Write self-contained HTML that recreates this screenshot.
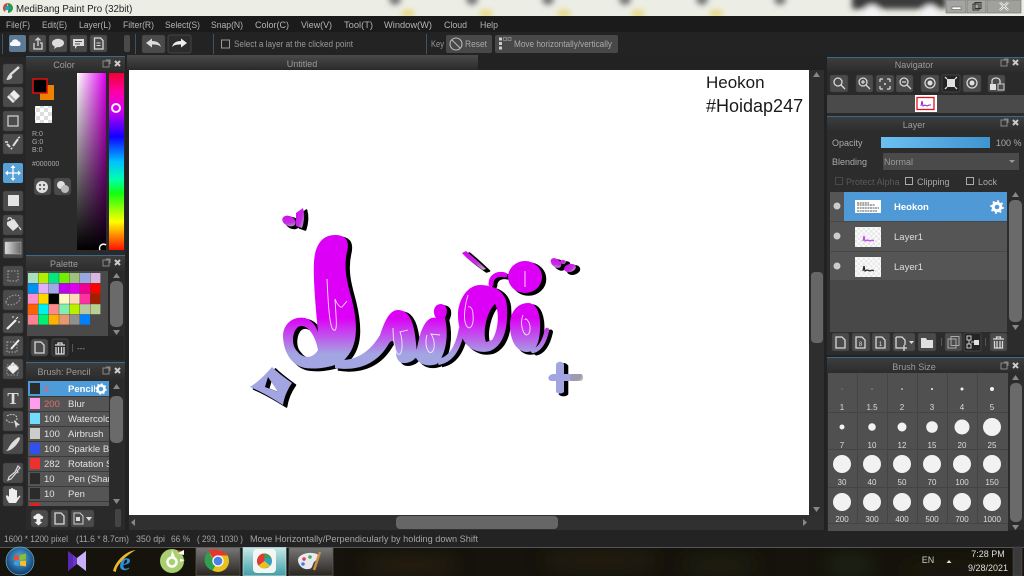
<!DOCTYPE html>
<html><head><meta charset="utf-8"><style>
html,body{margin:0;padding:0;background:#222;width:1024px;height:576px;overflow:hidden}
svg{display:block;position:absolute;left:0;top:0}
text{font-family:"Liberation Sans",sans-serif;font-size:9px;fill:#a8a8a8}
.m{font-size:9px;fill:#b4b4b4}
.c{text-anchor:middle}
.h{font-size:9px;fill:#9c9c9c;text-anchor:middle}
.b{fill:#4b4b4b;stroke:#3a3a3a;stroke-width:.5}
.d{fill:#333}
.i{fill:none;stroke:#d8d8d8;stroke-width:1.3}
.f{fill:#e0e0e0}
.w{fill:none;stroke:#f8e8ff;stroke-width:.9}
.r{font-size:9.5px;fill:#e2e2e2}
.s{font-size:8px;fill:#ddd;text-anchor:middle}
.st{font-size:9px;fill:#a4a4a4}
</style></head><body>
<svg width="1024" height="576" viewBox="0 0 1024 576" xmlns="http://www.w3.org/2000/svg">
<defs>
<linearGradient id="g" gradientUnits="userSpaceOnUse" x1="0" y1="318" x2="0" y2="354"><stop offset="0" stop-color="#dd00f6"/><stop offset="1" stop-color="#a3a5e2"/></linearGradient>
<linearGradient id="hd" x1="0" y1="0" x2="0" y2="1"><stop offset="0" stop-color="#3d3d3d"/><stop offset="1" stop-color="#2c2c2c"/></linearGradient>
<linearGradient id="tab" x1="0" y1="0" x2="0" y2="1"><stop offset="0" stop-color="#4a4a4a"/><stop offset="1" stop-color="#2a2a2a"/></linearGradient>
<linearGradient id="hue" x1="0" y1="0" x2="0" y2="1"><stop offset="0" stop-color="#f00030"/><stop offset=".1" stop-color="#ff00a0"/><stop offset=".2" stop-color="#e000f0"/><stop offset=".36" stop-color="#1000ff"/><stop offset=".5" stop-color="#00c0ff"/><stop offset=".6" stop-color="#00ffb0"/><stop offset=".68" stop-color="#10ff10"/><stop offset=".84" stop-color="#ffff00"/><stop offset="1" stop-color="#ff1000"/></linearGradient>
<linearGradient id="sv1" x1="0" y1="0" x2="1" y2="0"><stop offset="0" stop-color="#fff"/><stop offset="1" stop-color="#e000f0"/></linearGradient>
<linearGradient id="sv2" x1="0" y1="0" x2="0" y2="1"><stop offset="0" stop-color="#000" stop-opacity="0"/><stop offset="1" stop-color="#000"/></linearGradient>
<linearGradient id="blue" x1="0" y1="0" x2="1" y2="0"><stop offset="0" stop-color="#6cc0f0"/><stop offset="1" stop-color="#3f93d0"/></linearGradient>
<linearGradient id="gd" x1="0" y1="0" x2="1" y2="0"><stop offset="0" stop-color="#ddd"/><stop offset="1" stop-color="#666"/></linearGradient>
<linearGradient id="tbtn" x1="0" y1="0" x2="0" y2="1"><stop offset="0" stop-color="#777"/><stop offset="1" stop-color="#2a2622"/></linearGradient>
<linearGradient id="tact" x1="0" y1="0" x2="0" y2="1"><stop offset="0" stop-color="#c8e8e8"/><stop offset="1" stop-color="#40a0a8"/></linearGradient>
<radialGradient id="orb" cx=".5" cy=".4" r=".6"><stop offset="0" stop-color="#5ab0e0"/><stop offset="1" stop-color="#0a3a70"/></radialGradient>
<linearGradient id="fade" x1="0" y1="0" x2="1" y2="1"><stop offset="0" stop-color="#dd00f6"/><stop offset=".6" stop-color="#c030e0"/><stop offset="1" stop-color="#bbb"/></linearGradient>
<filter id="bl" x="-20%" y="-200%" width="140%" height="500%"><feGaussianBlur stdDeviation="3"/></filter>
<filter id="bl2" x="-50%" y="-50%" width="200%" height="200%"><feGaussianBlur stdDeviation="9"/></filter>
<pattern id="ck" width="8" height="8" patternUnits="userSpaceOnUse"><rect width="8" height="8" fill="#fff"/><rect width="4" height="4" fill="#ddd"/><rect x="4" y="4" width="4" height="4" fill="#ddd"/></pattern>
<pattern id="ck2" width="5" height="5" patternUnits="userSpaceOnUse"><rect width="5" height="5" fill="#fbfbfb"/><rect width="2.5" height="2.5" fill="#e8e8e8"/><rect x="2.5" y="2.5" width="2.5" height="2.5" fill="#e8e8e8"/></pattern>
</defs>

<!-- base -->
<rect width="1024" height="576" fill="#222"/>
<!-- title bar -->
<rect width="1024" height="16" fill="#eceee6"/>
<svg x="0" y="0" width="1024" height="16" viewBox="0 0 1024 16">
<g filter="url(#bl)">
<circle cx="395" cy="-1" r="6" fill="#777"/><circle cx="472" cy="-1" r="6" fill="#777"/><circle cx="548" cy="-1" r="6" fill="#777"/><circle cx="625" cy="-1" r="6" fill="#777"/><circle cx="702" cy="-1" r="6" fill="#777"/><circle cx="780" cy="-1" r="6" fill="#777"/>
<rect x="402" y="10" width="12" height="7" fill="#e8d880"/><rect x="480" y="10" width="12" height="7" fill="#e8d880"/><rect x="558" y="10" width="12" height="7" fill="#e8d880"/><rect x="632" y="10" width="12" height="7" fill="#e8d880"/><rect x="710" y="10" width="12" height="7" fill="#e8d880"/>
<rect x="852" y="-6" width="94" height="15" fill="#3a3a3a"/>
<circle cx="872" cy="14" r="9" fill="#f4f4f4"/><circle cx="930" cy="14" r="9" fill="#f4f4f4"/>
</g>
</svg>
<circle cx="8" cy="8" r="5" fill="#e8f0e8"/><path d="M8 3a5 5 0 0 1 0 10z" fill="#2a9a50"/><path d="M8 3a5 5 0 0 0-3 9z" fill="#d84030"/><circle cx="7" cy="8" r="2.2" fill="#20a0d0"/>
<text x="16" y="12" style="font-size:9.7px;fill:#222">MediBang Paint Pro (32bit)</text>
<g stroke="#777" stroke-width=".7"><rect x="946" y="0" width="20" height="13" fill="#a4a4a0"/><rect x="967" y="0" width="19" height="13" fill="#a4a4a0"/><rect x="987" y="0" width="34" height="13" fill="#a0a09c"/></g>
<rect x="952" y="7" width="9" height="2.5" fill="#fff" stroke="#444" stroke-width=".5"/>
<rect x="973" y="4" width="6" height="6" fill="none" stroke="#333"/><rect x="975" y="2.5" width="6" height="6" fill="none" stroke="#333"/>
<path d="M1000 2.5L1008 10M1008 2.5L1000 10" stroke="#fff" stroke-width="2.2"/><path d="M1000 2.5L1008 10M1008 2.5L1000 10" stroke="#333" stroke-width=".5"/>
<!-- menu -->
<rect y="16" width="1024" height="16" fill="#1b1b1b"/>
<g><text class="m" x="6" y="28" textLength="24" lengthAdjust="spacingAndGlyphs">File(F)</text><text class="m" x="42" y="28" textLength="25" lengthAdjust="spacingAndGlyphs">Edit(E)</text><text class="m" x="79" y="28" textLength="32" lengthAdjust="spacingAndGlyphs">Layer(L)</text><text class="m" x="123" y="28" textLength="31" lengthAdjust="spacingAndGlyphs">Filter(R)</text><text class="m" x="165" y="28" textLength="35" lengthAdjust="spacingAndGlyphs">Select(S)</text><text class="m" x="211" y="28" textLength="32" lengthAdjust="spacingAndGlyphs">Snap(N)</text><text class="m" x="255" y="28" textLength="34" lengthAdjust="spacingAndGlyphs">Color(C)</text><text class="m" x="301" y="28" textLength="31" lengthAdjust="spacingAndGlyphs">View(V)</text><text class="m" x="344" y="28" textLength="29" lengthAdjust="spacingAndGlyphs">Tool(T)</text><text class="m" x="384" y="28" textLength="48" lengthAdjust="spacingAndGlyphs">Window(W)</text><text class="m" x="444" y="28" textLength="23" lengthAdjust="spacingAndGlyphs">Cloud</text><text class="m" x="480" y="28" textLength="18" lengthAdjust="spacingAndGlyphs">Help</text></g>
<!-- toolbar -->
<rect y="32" width="1024" height="23" fill="#232323"/>
<rect x="2" y="34" width="1" height="20" fill="#3a5568"/><rect x="135" y="34" width="1" height="20" fill="#3a5568"/><rect x="213" y="34" width="1" height="20" fill="#3a5568"/><rect x="426" y="34" width="1" height="20" fill="#3a5568"/>
<rect x="9" y="35" width="17" height="17" rx="2" fill="#5c7a94"/>
<rect x="29" y="35" width="17" height="17" rx="2" class="b"/><rect x="49" y="35" width="18" height="17" rx="2" class="b"/><rect x="70" y="35" width="17" height="17" rx="2" class="b"/><rect x="90" y="35" width="17" height="17" rx="2" class="b"/>
<rect x="124" y="35" width="6" height="17" rx="2" fill="#4a4a4a"/>
<rect x="142" y="35" width="23" height="18" rx="2" class="b"/><rect x="168" y="35" width="23" height="18" rx="2" fill="#2c2c2c" stroke="#444"/>
<path d="M11.5 46c-2-.3-2.5-3.5.3-4 .7-3 5.2-3.5 6.5-.8 2.5-.2 3.5 4.400.5 4.800z" fill="#f4f8ff"/>
<path d="M34 43v6h8v-6h-2M38 46V38M35.5 40.5L38 38l2.5 2.5" class="i"/>
<ellipse cx="58" cy="43" rx="6" ry="4.3" fill="#ddd"/><path d="M55 46l-1 3 4-2.5z" fill="#ddd"/>
<path d="M73 39h11v7h-7l-2 3v-3h-2z" fill="#ddd"/><path d="M75 41.5h7M75 44h5" stroke="#555"/>
<path d="M94.5 38h6l2.5 2.5V49h-8.5z" class="i"/><path d="M96.5 43h4M96.5 45.5h4" stroke="#ddd"/>
<path d="M146 43l6-4.5v2.5c5 0 8 2 9 6-2-2-4-2.5-9-2.5v3z" fill="#ddd"/>
<path d="M187 43l-6-4.5v2.5c-5 0-8 2-9 6 2-2 4-2.5 9-2.5v3z" fill="#eee"/>
<rect x="221.5" y="40" width="8" height="8" fill="none" stroke="#999"/>
<text x="234" y="47" textLength="119" lengthAdjust="spacingAndGlyphs" style="font-size:9px;fill:#999">Select a layer at the clicked point</text>
<text x="431" y="47" textLength="13" lengthAdjust="spacingAndGlyphs" style="font-size:9px;fill:#999">Key</text>
<rect x="446" y="35" width="46" height="18" rx="2" fill="#484848"/><circle cx="456" cy="44" r="6" fill="none" stroke="#bbb" stroke-width="1.1"/><path d="M452 40l8 8" stroke="#bbb"/>
<text x="465" y="47" textLength="22" lengthAdjust="spacingAndGlyphs" style="font-size:9px;fill:#aaa">Reset</text>
<rect x="495" y="35" width="123" height="18" rx="2" fill="#484848"/>
<g fill="#ccc"><rect x="499" y="37.5" width="3" height="3"/><rect x="503.5" y="37.5" width="3" height="3" fill="none" stroke="#aaa" stroke-width=".6"/><rect x="508" y="37.5" width="3" height="3" fill="none" stroke="#aaa" stroke-width=".6"/><rect x="499" y="42" width="3" height="3"/><rect x="499" y="46.5" width="3" height="3"/></g>
<text x="514" y="47" textLength="98" lengthAdjust="spacingAndGlyphs" style="font-size:9px;fill:#aaa">Move horizontally/vertically</text>

<!-- tab -->
<rect x="127" y="55" width="351" height="15" fill="url(#tab)"/>
<text x="302" y="67" class="h">Untitled</text>

<!-- canvas -->
<rect x="129" y="70" width="680" height="445" fill="#fff"/>
<text x="706" y="88" style="font-size:17px;fill:#1a1a1a">Heokon</text>
<text x="706" y="112" style="font-size:18px;fill:#1a1a1a">#Hoidap247</text>

<!-- lettering shadow (explicit copy) -->
<g transform="translate(3.5,2)" fill="#000" stroke="#000" stroke-width="1.6" stroke-linejoin="round">
<path fill-rule="evenodd" d="M335 235C345 235 350 240 347 252C343 270 348 285 352 300C358 325 358 345 346 358C340 366 320 370 305 368C290 365 283 350 283 335C284 322 295 316 305 318C312 320 316 326 318 332C316 310 313 280 314 262C315 245 322 235 335 235ZM298 327C292 332 291 345 297 351C302 358 312 360 318 350C316 338 308 322 298 327Z"/>
<path d="M335 360C355 362 370 352 380 335C385 320 390 310 398 310C408 310 413 320 415 335C417 350 418 358 412 361C402 366 396 362 396 352C395 340 392 338 388 345C378 362 360 372 335 368Z"/>
<path d="M408 362C417 358 417 345 420 335C424 322 430 316 436 318C432 312 434 304 441 304C448 305 448 312 445 318C449 335 446 355 437 364C428 367 420 365 416 358Z"/>
<path fill-rule="evenodd" d="M458 312C460 295 470 285 480 285C495 285 507 292 507 308C508 325 505 345 490 351C475 355 462 345 460 330C458 322 458 318 458 312ZM486 342C482 330 488 310 495 304C500 312 498 332 492 340Z"/>
<path fill="none" stroke-width="6.500" d="M438 362C450 360 458 350 462 328"/>
<path fill="none" stroke-width="5.500" stroke-linecap="round" d="M491 284C491 276 498 273 505 275"/>
<ellipse cx="525" cy="277" rx="17" ry="16"/>
<path d="M510 325C510 310 519 303 528 303C537 303 541 315 540 330C539 345 535 352 527 352C516 352 510 340 510 325Z"/>
<path fill="none" stroke-width="5" stroke-linecap="round" d="M533 351C541 349 545 339 547 330"/>
<path fill-rule="evenodd" d="M250 387C258 382 265 375 272 367C277 372 285 378 292 383C287 390 284 398 283 405C272 398 262 392 250 387ZM268 377L278 392L265 387Z"/>
<path d="M556 374V364C558 361 562 361 564 364V392C562 394 558 394 556 392Z"/>
<path d="M462 253L466 251C472 256 480 263 486 269L483 270C476 265 468 260 462 253Z"/>
<ellipse cx="289" cy="221" rx="7" ry="5" transform="rotate(25 289 221)"/>
<path d="M296 213L303 208C305 215 304 222 302 228L296 226Z"/>
<ellipse cx="556" cy="263" rx="6" ry="4" transform="rotate(40 556 263)"/>
<ellipse cx="563" cy="262" rx="3" ry="2"/>
<ellipse cx="570" cy="268" rx="6" ry="4" transform="rotate(-15 570 268)"/>
</g>
<!-- lettering fill -->
<g fill="url(#g)" stroke="url(#g)" stroke-width="0">
<path fill-rule="evenodd" d="M335 235C345 235 350 240 347 252C343 270 348 285 352 300C358 325 358 345 346 358C340 366 320 370 305 368C290 365 283 350 283 335C284 322 295 316 305 318C312 320 316 326 318 332C316 310 313 280 314 262C315 245 322 235 335 235ZM298 327C292 332 291 345 297 351C302 358 312 360 318 350C316 338 308 322 298 327Z"/>
<path d="M335 360C355 362 370 352 380 335C385 320 390 310 398 310C408 310 413 320 415 335C417 350 418 358 412 361C402 366 396 362 396 352C395 340 392 338 388 345C378 362 360 372 335 368Z"/>
<path d="M408 362C417 358 417 345 420 335C424 322 430 316 436 318C432 312 434 304 441 304C448 305 448 312 445 318C449 335 446 355 437 364C428 367 420 365 416 358Z"/>
<path fill-rule="evenodd" d="M458 312C460 295 470 285 480 285C495 285 507 292 507 308C508 325 505 345 490 351C475 355 462 345 460 330C458 322 458 318 458 312ZM486 342C482 330 488 310 495 304C500 312 498 332 492 340Z"/>
<path fill="none" stroke-width="6" d="M438 362C450 360 458 350 462 328"/>
<path fill="none" stroke-width="5" stroke-linecap="round" d="M491 284C491 276 498 273 505 275"/>
<ellipse cx="525" cy="277" rx="17" ry="16"/>
<path d="M510 325C510 310 519 303 528 303C537 303 541 315 540 330C539 345 535 352 527 352C516 352 510 340 510 325Z"/>
<path fill="none" stroke-width="4.5" stroke-linecap="round" d="M533 351C541 349 545 339 547 330"/>
<path fill-rule="evenodd" d="M250 387C258 382 265 375 272 367C277 372 285 378 292 383C287 390 284 398 283 405C272 398 262 392 250 387ZM268 377L278 392L265 387Z"/>
<path d="M553 374H556V364C558 361 562 361 564 364V374H582C582 378 580 381 575 381H564V392C562 394 558 394 556 392V381H552C547 381 547 375 553 374Z"/>
</g>
<g fill="url(#fade)">
<path d="M462 253L466 251C472 256 480 263 486 269L483 270C476 265 468 260 462 253Z"/>
<ellipse cx="289" cy="221" rx="7" ry="5" transform="rotate(25 289 221)"/>
<path d="M296 213L303 208C305 215 304 222 302 228L296 226Z"/>
<ellipse cx="556" cy="263" rx="6" ry="4" transform="rotate(40 556 263)"/>
<ellipse cx="563" cy="262" rx="3" ry="2"/>
<ellipse cx="570" cy="268" rx="6" ry="4" transform="rotate(-15 570 268)"/>
</g>
<path d="M327 279C328 300 329 320 332 328C336 334 337 328 336 315L335 299C337 304 340 308 342 307L347 301M393 328C393 340 395 352 398 354C403 357 403 340 400 332L408 330M427 335C424 345 428 355 432 352C436 348 434 338 431 334L440 335M468 295C465 305 463 318 466 325C470 332 474 325 473 315C473 308 470 306 468 307M523 315C520 322 522 332 526 335C531 335 531 325 528 321C526 318 525 319 525 320M525 271V287" class="w"/>
<rect x="570" y="374" width="13" height="7" rx="3" fill="#999" opacity=".7"/>

<!-- canvas scrollbars -->
<rect x="809" y="70" width="15" height="460" fill="#2e2e2e"/>
<rect x="811" y="272" width="12" height="71" rx="4" fill="#666"/>
<path d="M813 77h7l-3.5-5zM813 507h7l-3.5 5z" fill="#888"/>
<rect x="129" y="515" width="695" height="15" fill="#303030"/>
<rect x="396" y="516" width="162" height="13" rx="4" fill="#666"/>
<path d="M135 519v7l-4-3.5z" fill="#888"/><path d="M803 519v7l4-3.5z" fill="#888"/>

<!-- left tools -->
<rect x="0" y="57" width="26" height="473" fill="#262626"/>
<g>
<rect x="3" y="64" width="20" height="20" rx="2" class="b"/><rect x="3" y="87" width="20" height="20" rx="2" class="b"/><rect x="3" y="111" width="20" height="20" rx="2" class="b"/><rect x="3" y="134" width="20" height="20" rx="2" class="b"/>
<rect x="3" y="163" width="20" height="20" rx="2" fill="#58a0d8"/>
<rect x="3" y="191" width="20" height="20" rx="2" class="b"/><rect x="3" y="215" width="20" height="20" rx="2" class="b"/><rect x="3" y="238" width="20" height="20" rx="2" class="b"/>
<rect x="3" y="266" width="20" height="20" rx="2" class="b"/><rect x="3" y="290" width="20" height="20" rx="2" class="b"/><rect x="3" y="313" width="20" height="20" rx="2" class="b"/><rect x="3" y="336" width="20" height="20" rx="2" class="b"/><rect x="3" y="359" width="20" height="20" rx="2" class="b"/>
<rect x="3" y="388" width="20" height="20" rx="2" class="b"/><rect x="3" y="411" width="20" height="20" rx="2" class="b"/><rect x="3" y="434" width="20" height="20" rx="2" class="b"/>
<rect x="3" y="463" width="20" height="20" rx="2" class="b"/><rect x="3" y="486" width="20" height="20" rx="2" class="b"/>
</g>
<path d="M19 67L10 75" stroke="#ddd" stroke-width="2.5"/><path d="M10 74c-2 1-3 4-3.5 6 3 0 5.5-1 6-4z" fill="#ddd"/>
<path d="M14 90l6 6-7 7-6-6z" fill="#eee"/><path d="M8.5 95.5l6 6 1.5-1.5-6-6z" fill="#aaa"/>
<rect x="8" y="116" width="10" height="10" fill="none" stroke="#ccc" stroke-width="1.3"/>
<path d="M7 144l3 3M11 148l1 1M13 146l5-7" stroke="#ddd" stroke-width="2"/><path d="M5 142h3M18 138l2-1" stroke="#ddd" stroke-width="1.5"/>
<path d="M13 166v14M6 173h14" stroke="#fff" stroke-width="1.3"/><path d="M13 165l-2.5 3h5zM13 181l-2.5-3h5zM5 173l3-2.5v5zM21 173l-3-2.5v5z" fill="#fff"/>
<rect x="8" y="195" width="11" height="11" fill="#e4e4e4"/>
<path d="M7 222l7-3 5 7-6 5-6-6z" fill="#e4e4e4"/><path d="M8 220c0-3 3-3 4 0M19 227l2 3" class="i"/>
<rect x="5" y="242" width="16" height="12" fill="url(#gd)" stroke="#bbb" stroke-width=".5"/>
<rect x="8" y="271" width="10" height="10" fill="none" stroke="#aaa" stroke-dasharray="1.5 1.5"/>
<path d="M6 302c0-4 6-7 10-7 4 0 5 3 3 6-3 4-13 6-13 1z" fill="none" stroke="#aaa" stroke-dasharray="1.5 1.5"/>
<path d="M7 329L16 320" stroke="#eee" stroke-width="2.2"/><path d="M18 317l-2 2M13 316v2M20 322h-2" stroke="#eee"/>
<rect x="7" y="342" width="10" height="10" fill="none" stroke="#aaa" stroke-dasharray="1.5 1.5"/><path d="M11 349l8-9" stroke="#eee" stroke-width="2"/>
<path d="M13 362l6 6-6 6-6-6z" fill="#eee"/><rect x="7" y="365" width="11" height="10" fill="none" stroke="#999" stroke-dasharray="1.5 1.5"/>
<text x="13" y="404" class="c" style="font:bold 17px 'Liberation Serif',serif;fill:#ddd">T</text>
<path d="M7 416c3-2 7-2 9 0s1 5-2 6c-3 1-7 0-8-3" fill="none" stroke="#ccc" stroke-dasharray="2 1"/><path d="M14 420l6 5-3 .5-1 3z" fill="#ddd"/>
<path d="M19 437c-4 2-9 7-11 12l-2 2 3-.5c5-2 10-8 11-12z" fill="#ddd"/>
<path d="M18 466l2 2-3 3 1 1-2 1-5 6-3 1 1-3 6-5 1-2z" fill="none" stroke="#ddd" stroke-width="1.2"/>
<path d="M9 503c-2-3-3-5-3-7 0-1 2-1 3 1v-7c0-1.5 2-1.5 2 0v-1c0-1.5 2-1.5 2 0v1c0-1.5 2-1.5 2 0v1c0-1.5 2-1.5 2 0v7l2-2c1-1 2 0 1 1l-4 6z" fill="#eee"/>

<!-- Color panel -->
<rect x="26" y="56" width="99" height="1" fill="#3b6a88"/>
<rect x="26" y="57" width="99" height="15" fill="url(#hd)"/>
<rect x="26" y="72" width="99" height="183" fill="#2a2a2a"/>
<text x="64" y="68" class="h">Color</text>
<rect x="40" y="85" width="14" height="15" fill="#f08000"/>
<rect x="33" y="79" width="14" height="14" fill="#000" stroke="#e01010" stroke-width="1.5"/>
<rect x="35" y="106" width="17" height="17" fill="url(#ck)"/>
<text x="32" y="136" style="font-size:7px;fill:#aaa">R:0</text><text x="32" y="144" style="font-size:7px;fill:#aaa">G:0</text><text x="32" y="152" style="font-size:7px;fill:#aaa">B:0</text>
<text x="32" y="166" style="font-size:7px;fill:#aaa">#000000</text>
<rect x="34" y="178" width="17" height="17" rx="3" class="b"/><rect x="54" y="178" width="17" height="17" rx="3" class="b"/>
<circle cx="42" cy="187" r="6" class="f"/><circle cx="40" cy="185" r="1" fill="#444"/><circle cx="44" cy="185" r="1" fill="#444"/><circle cx="40" cy="189" r="1" fill="#444"/><circle cx="44" cy="189" r="1" fill="#444"/>
<circle cx="61" cy="185" r="4" class="f"/><circle cx="65" cy="189" r="4" fill="#bbb"/>
<rect x="77" y="73" width="29" height="177" fill="url(#sv1)"/><rect x="77" y="73" width="29" height="177" fill="url(#sv2)"/>
<rect x="109" y="73" width="15" height="177" fill="url(#hue)"/>
<circle cx="116" cy="108" r="4" fill="none" stroke="#fff" stroke-width="2"/>
<path d="M100 250a4 4 0 0 1 6-5" fill="none" stroke="#fff" stroke-width="1.5"/>
<g id="hi"><rect x="103" y="61" width="6" height="6" fill="none" stroke="#888"/><path d="M106 60h4v4" fill="none" stroke="#888"/><path d="M115 61l5 5M120 61l-5 5" stroke="#ccc" stroke-width="2"/></g>

<!-- Palette panel -->
<rect x="26" y="255" width="99" height="1" fill="#3b6a88"/>
<rect x="26" y="256" width="99" height="15" fill="url(#hd)"/>
<text x="64" y="267" class="h">Palette</text>
<use href="#hi" y="199"/>
<rect x="26" y="271" width="99" height="91" fill="#2a2a2a"/>
<rect x="27" y="271" width="81" height="65" fill="#4a4a4a"/>
<g>
<rect x="28" y="273" width="10" height="10" fill="#a8e0c0"/><rect x="38.4" y="273" width="10" height="10" fill="#b0f000"/><rect x="48.8" y="273" width="10" height="10" fill="#00e880"/><rect x="59.2" y="273" width="10" height="10" fill="#70f000"/><rect x="69.6" y="273" width="10" height="10" fill="#a0c080"/><rect x="80" y="273" width="10" height="10" fill="#98a8e0"/><rect x="90.4" y="273" width="10" height="10" fill="#d8b8e0"/>
<rect x="28" y="283.4" width="10" height="10" fill="#0090f0"/><rect x="38.4" y="283.4" width="10" height="10" fill="#e0b0ff"/><rect x="48.8" y="283.4" width="10" height="10" fill="#a0a8e8"/><rect x="59.2" y="283.4" width="10" height="10" fill="#c000f0"/><rect x="69.6" y="283.4" width="10" height="10" fill="#e000f0"/><rect x="80" y="283.4" width="10" height="10" fill="#f00090"/><rect x="90.4" y="283.4" width="10" height="10" fill="#ff0000"/>
<rect x="28" y="293.8" width="10" height="10" fill="#ff90d0"/><rect x="38.4" y="293.8" width="10" height="10" fill="#ffd800"/><rect x="48.8" y="293.8" width="10" height="10" fill="#000"/><rect x="59.2" y="293.8" width="10" height="10" fill="#fff8c0"/><rect x="69.6" y="293.8" width="10" height="10" fill="#ffd8b8"/><rect x="80" y="293.8" width="10" height="10" fill="#ff30a0"/><rect x="90.4" y="293.8" width="10" height="10" fill="#a02000"/>
<rect x="28" y="304.2" width="10" height="10" fill="#ff6000"/><rect x="38.4" y="304.2" width="10" height="10" fill="#00f0f0"/><rect x="48.8" y="304.2" width="10" height="10" fill="#ff8888"/><rect x="59.2" y="304.2" width="10" height="10" fill="#80f0b0"/><rect x="69.6" y="304.2" width="10" height="10" fill="#b8f000"/><rect x="80" y="304.2" width="10" height="10" fill="#b8c8a0"/><rect x="90.4" y="304.2" width="10" height="10" fill="#b8d090"/>
<rect x="28" y="314.6" width="10" height="10" fill="#ff8090"/><rect x="38.4" y="314.6" width="10" height="10" fill="#00f070"/><rect x="48.8" y="314.6" width="10" height="10" fill="#ffb000"/><rect x="59.2" y="314.6" width="10" height="10" fill="#e89870"/><rect x="69.6" y="314.6" width="10" height="10" fill="#909090"/><rect x="80" y="314.6" width="10" height="10" fill="#0080ff"/>
</g>
<rect x="110" y="281" width="13" height="46" rx="5" fill="#6a6a6a"/>
<path d="M113 278h7l-3.5-5zM113 330h7l-3.5 5z" fill="#888"/>
<rect x="29" y="336" width="95" height="24" fill="#242424"/>
<rect x="31" y="339" width="17" height="17" rx="3" class="b"/><rect x="52" y="339" width="16" height="17" rx="2" fill="#2e2e2e" stroke="#444"/>
<path d="M35 342h6l3 3v8h-9z" class="i"/>
<path d="M55 345h10M56 347v7h8v-7M58.5 347v7M61.5 347v7M58 345v-2h4v2" class="i"/>
<rect x="72" y="344" width="1" height="8" fill="#555"/>
<text x="77" y="351" style="font-size:8px;fill:#aaa">---</text>

<!-- Brush panel -->
<rect x="26" y="362" width="99" height="1" fill="#3b6a88"/>
<rect x="26" y="363" width="99" height="16" fill="url(#hd)"/>
<text x="64" y="375" class="h">Brush: Pencil</text>
<use href="#hi" y="307"/>
<rect x="26" y="379" width="99" height="151" fill="#2a2a2a"/>
<rect x="28" y="381" width="81" height="125" fill="#555"/>
<svg x="28" y="381" width="81" height="125" viewBox="28 381 81 125">
<rect x="28" y="381" width="81" height="15" fill="#4d9bd8"/>
<path d="M28 396.5h81M28 411.5h81M28 426.5h81M28 441.5h81M28 456.5h81M28 471.5h81M28 486.5h81M28 501.5h81" stroke="#3a3a3a"/>
<rect x="30" y="383" width="10" height="11" fill="#2b2b2b"/><rect x="30" y="398" width="10" height="11" fill="#ff9cf0"/><rect x="30" y="413" width="10" height="11" fill="#70dcff"/><rect x="30" y="428" width="10" height="11" fill="#ccc"/><rect x="30" y="443" width="10" height="11" fill="#3050f0"/><rect x="30" y="458" width="10" height="11" fill="#f03030"/><rect x="30" y="473" width="10" height="11" fill="#2b2b2b"/><rect x="30" y="488" width="10" height="11" fill="#2b2b2b"/><rect x="30" y="503" width="10" height="11" fill="#e02020"/>
<text x="44" y="392" class="r" style="fill:#ee6060">4</text><text x="44" y="407" class="r" style="fill:#e07070">200</text><text x="44" y="422" class="r">100</text><text x="44" y="437" class="r">100</text><text x="44" y="452" class="r">100</text><text x="44" y="467" class="r">282</text><text x="44" y="482" class="r">10</text><text x="44" y="497" class="r">10</text>
<text x="68" y="392" class="r" style="font-weight:bold;fill:#fff">Pencil</text><text x="68" y="407" class="r">Blur</text><text x="68" y="422" class="r">Watercolor</text><text x="68" y="437" class="r">Airbrush</text><text x="68" y="452" class="r">Sparkle Brush</text><text x="68" y="467" class="r">Rotation Symmetry</text><text x="68" y="482" class="r">Pen (Sharp)</text><text x="68" y="497" class="r">Pen</text>
<rect x="95" y="382" width="14" height="13" fill="#4d9bd8"/>
<circle cx="101" cy="389" r="3.5" fill="none" stroke="#fff" stroke-width="2.5"/><circle cx="101" cy="389" r="5" fill="none" stroke="#fff" stroke-width="1.2" stroke-dasharray="1.8 2.1"/>
</svg>
<rect x="110" y="396" width="13" height="47" rx="5" fill="#6a6a6a"/>
<path d="M113 389h7l-3.5-5zM113 499h7l-3.5 5z" fill="#888"/>
<rect x="31" y="510" width="17" height="17" rx="3" class="b"/><rect x="51" y="510" width="17" height="17" rx="2" class="b"/><rect x="71" y="510" width="23" height="17" rx="2" class="b"/><rect x="115" y="509" width="6" height="18" rx="2" fill="#444"/>
<path d="M34.5 519c-2-.5-1.5-3.5 1-3.5 .5-2.5 5-2.5 5.5 0 2.5 0 3 3 1 3.5zM36.5 519h4v3h2l-4 3.5-4-3.5h2z" fill="#eee"/>
<path d="M55 513h6l3 3v8h-9z" class="i"/>
<path d="M74 513h6l3 3v8h-9z" fill="none" stroke="#ccc"/><rect x="76" y="517" width="4" height="4" fill="#ddd"/><path d="M86 517h6l-3 4z" fill="#ddd"/>

<!-- status -->
<rect y="530" width="1024" height="17" fill="#232323"/>
<text x="4" y="542" class="st" textLength="64" lengthAdjust="spacingAndGlyphs">1600 * 1200 pixel</text><text x="76" y="542" class="st" textLength="53" lengthAdjust="spacingAndGlyphs">(11.6 * 8.7cm)</text><text x="136" y="542" class="st" textLength="29" lengthAdjust="spacingAndGlyphs">350 dpi</text><text x="171" y="542" class="st" textLength="19" lengthAdjust="spacingAndGlyphs">66 %</text><text x="197" y="542" class="st" textLength="46" lengthAdjust="spacingAndGlyphs">( 293, 1030 )</text><text x="250" y="542" class="st" textLength="228" lengthAdjust="spacingAndGlyphs">Move Horizontally/Perpendicularly by holding down Shift</text>

<!-- Navigator -->
<rect x="827" y="57" width="197" height="1" fill="#3b6a88"/>
<rect x="827" y="58" width="197" height="14" fill="url(#hd)"/>
<text x="914" y="68" class="h">Navigator</text>
<use href="#hi" x="898" y="-1"/>
<rect x="827" y="72" width="197" height="44" fill="#2a2a2a"/>
<rect x="830" y="75" width="18" height="17" rx="2" class="b"/><rect x="856" y="75" width="17" height="17" rx="2" class="b"/><rect x="876" y="75" width="18" height="17" rx="2" class="b"/><rect x="896" y="75" width="17" height="17" rx="2" class="b"/><rect x="921" y="75" width="18" height="17" rx="2" class="b"/><rect x="942" y="75" width="18" height="17" rx="2" fill="#242424" stroke="#444"/><rect x="963" y="75" width="18" height="17" rx="2" class="b"/><rect x="988" y="75" width="17" height="17" rx="2" class="b"/>
<circle cx="838" cy="82" r="4" class="i"/><path d="M841 85l4 4" class="i"/><circle cx="863" cy="82" r="4" class="i"/><path d="M866 85l4 4M861 82h4M863 80v4" class="i"/>
<path d="M880 79h3M880 79v3M890 79h-3M890 79v3M880 89h3M880 89v-3M890 89h-3M890 89v-3" class="i"/><circle cx="885" cy="84" r="1" class="f"/>
<circle cx="904" cy="82" r="4" class="i"/><path d="M907 85l4 4M902 82h4" class="i"/>
<circle cx="930" cy="83" r="5" class="i"/><circle cx="930" cy="83" r="2.5" class="f"/><circle cx="972" cy="83" r="5" class="i"/><circle cx="972" cy="83" r="2.5" class="f"/>
<rect x="947" y="79" width="8" height="8" class="f"/><path d="M945 77l2 2M957 77l-2 2M945 89l2-2M957 89l-2-2" class="i"/>
<rect x="990" y="84" width="6" height="6" class="f"/><rect x="998" y="84" width="6" height="6" fill="none" stroke="#ccc"/><path d="M992 84v-3c0-4 8-4 8 0v3" class="i"/>
<rect x="827" y="95" width="197" height="18" fill="#4a4a4a"/>
<rect x="915" y="95" width="22" height="17" fill="#fff"/><rect x="917" y="97.5" width="17" height="12" fill="none" stroke="#e01020" stroke-width="1.3"/>
<path d="M921 106l1-5 1 5 2-1 2 1 2-1 2 0" fill="none" stroke="#9020d0"/>

<!-- Layer -->
<rect x="827" y="116" width="197" height="1" fill="#3b6a88"/>
<rect x="827" y="117" width="197" height="15" fill="url(#hd)"/>
<text x="914" y="128" class="h">Layer</text>
<use href="#hi" x="898" y="59"/>
<rect x="827" y="132" width="197" height="223" fill="#2c2c2c"/>
<text x="832" y="146" style="font-size:9px;fill:#aaa">Opacity</text>
<rect x="881" y="137" width="109" height="11" fill="url(#blue)"/>
<text x="996" y="146" style="font-size:9px;fill:#aaa">100 %</text>
<text x="832" y="165" style="font-size:9px;fill:#aaa">Blending</text>
<rect x="883" y="153" width="136" height="17" fill="#4a4a4a"/>
<text x="884" y="165" style="font-size:9px;fill:#999">Normal</text>
<path d="M1009 160h6l-3 3z" fill="#999"/>
<rect x="835.5" y="177.5" width="7" height="7" fill="none" stroke="#4a4a4a"/>
<text x="846" y="185" style="font-size:9px;fill:#5a5a5a">Protect Alpha</text>
<rect x="905.5" y="177.5" width="7" height="7" fill="none" stroke="#aaa"/>
<text x="917" y="185" style="font-size:9px;fill:#aaa">Clipping</text>
<rect x="966.5" y="177.5" width="7" height="7" fill="none" stroke="#aaa"/>
<text x="978" y="185" style="font-size:9px;fill:#aaa">Lock</text>
<rect x="830" y="192" width="177" height="140" fill="#484848"/>
<rect x="830" y="192" width="177" height="29" fill="#555"/><rect x="844" y="192" width="163" height="29" fill="#4f9ad6"/>
<rect x="830" y="222" width="177" height="29" fill="#555"/><rect x="830" y="252" width="177" height="28" fill="#555"/>
<circle cx="837" cy="206" r="3.5" fill="#ccc"/><circle cx="837" cy="236" r="3.5" fill="#ccc"/><circle cx="837" cy="266" r="3.5" fill="#ccc"/>
<rect x="855" y="200" width="26" height="13" fill="#fff"/>
<path d="M857 203h12M857 205h18M857 208h22M857 211h20" stroke="#555" stroke-width="1" stroke-dasharray="2 .6"/>
<rect x="855" y="227" width="26" height="20" fill="url(#ck2)"/><rect x="855" y="257" width="26" height="20" fill="url(#ck2)"/>
<path d="M863 241l1-5 1 5 2-1 3 1 2-1 2 1" fill="none" stroke="#c040f0" stroke-width="1.2"/>
<path d="M863 271l1-5 1 5 2-1 3 1 2-1 2 1" fill="none" stroke="#222" stroke-width="1.2"/>
<text x="894" y="210" style="font:bold 9.5px 'Liberation Sans',sans-serif;fill:#fff">Heokon</text>
<text x="894" y="240" style="font-size:9.5px;fill:#ddd">Layer1</text><text x="894" y="270" style="font-size:9.5px;fill:#ddd">Layer1</text>
<circle cx="997" cy="207" r="3.8" fill="none" stroke="#fff" stroke-width="3"/><circle cx="997" cy="207" r="6" fill="none" stroke="#fff" stroke-width="1.6" stroke-dasharray="2 2.7"/>
<rect x="1009" y="200" width="13" height="122" rx="5" fill="#6a6a6a"/>
<path d="M1012 197h7l-3.5-5zM1012 325h7l-3.5 5z" fill="#888"/>
<rect x="832" y="333" width="17" height="18" rx="2" class="b"/><rect x="852" y="333" width="18" height="18" rx="2" class="b"/><rect x="872" y="333" width="18" height="18" rx="2" class="b"/><rect x="893" y="333" width="22" height="18" rx="2" class="b"/><rect x="918" y="333" width="18" height="18" rx="2" class="b"/><rect x="945" y="333" width="17" height="18" rx="2" class="b"/><rect x="964" y="333" width="17" height="18" rx="2" fill="#242424" stroke="#444"/><rect x="990" y="333" width="17" height="18" rx="2" class="b"/>
<path d="M836 337h6l3 3v8h-9zM856 337h6l3 3v8h-9zM876 337h6l3 3v8h-9z" class="i"/>
<text x="860.5" y="346" class="c" style="font-size:6px;fill:#ddd">8</text><text x="880.5" y="346" class="c" style="font-size:6px;fill:#ddd">1</text>
<path d="M896 337h6l3 3v5M896 337v11h5M904 345v6M901 348h6" class="i"/><path d="M909 341h5l-2.5 3z" fill="#ddd"/>
<path d="M921 338h5l1 2h6v8h-12z" class="f"/>
<rect x="948" y="339" width="8" height="9" fill="none" stroke="#aaa"/><rect x="951" y="336.5" width="8" height="9" fill="none" stroke="#aaa"/>
<g fill="none" stroke="#ccc"><rect x="967" y="336" width="4" height="4"/><rect x="967" y="344" width="4" height="4"/></g><rect x="974" y="340" width="5" height="5" class="f"/><path d="M969 340v4M971 342h3" stroke="#ccc"/>
<path d="M993 339h11M994.5 341v7h8v-7M997 341v7M1000 341v7M996.5 339v-2h4v2" class="i"/>
<rect x="941" y="338" width="1" height="8" fill="#555"/><rect x="985" y="338" width="1" height="8" fill="#555"/>

<!-- Brush Size -->
<rect x="827" y="357" width="197" height="1" fill="#3b6a88"/>
<rect x="827" y="358" width="197" height="15" fill="url(#hd)"/>
<text x="914" y="370" class="h">Brush Size</text>
<use href="#hi" x="898" y="302"/>
<rect x="827" y="373" width="197" height="157" fill="#2c2c2c"/>
<rect x="828" y="373" width="180" height="158" fill="#505050"/>
<path d="M857.5 373v150M887.5 373v150M917.5 373v150M947.5 373v150M977.5 373v150M828 412.5h180M828 449.5h180M828 487.5h180M828 523.5h180" stroke="#444"/>
<g fill="#f2f2f2">
<circle cx="842" cy="389" r=".4"/><circle cx="872" cy="389" r=".5"/><circle cx="902" cy="389" r=".8"/><circle cx="932" cy="389" r="1"/><circle cx="962" cy="389" r="1.5"/><circle cx="992" cy="389" r="2"/>
<circle cx="842" cy="427" r="2.5"/><circle cx="872" cy="427" r="3.8"/><circle cx="902" cy="427" r="4.5"/><circle cx="932" cy="427" r="5.8"/><circle cx="962" cy="427" r="7.5"/><circle cx="992" cy="427" r="9"/>
<circle cx="842" cy="464" r="9"/><circle cx="872" cy="464" r="9"/><circle cx="902" cy="464" r="9"/><circle cx="932" cy="464" r="9"/><circle cx="962" cy="464" r="9"/><circle cx="992" cy="464" r="9"/>
<circle cx="842" cy="502" r="9"/><circle cx="872" cy="502" r="9"/><circle cx="902" cy="502" r="9"/><circle cx="932" cy="502" r="9"/><circle cx="962" cy="502" r="9"/><circle cx="992" cy="502" r="9"/>
</g>
<text x="842" y="410" class="s">1</text><text x="872" y="410" class="s">1.5</text><text x="902" y="410" class="s">2</text><text x="932" y="410" class="s">3</text><text x="962" y="410" class="s">4</text><text x="992" y="410" class="s">5</text>
<text x="842" y="448" class="s">7</text><text x="872" y="448" class="s">10</text><text x="902" y="448" class="s">12</text><text x="932" y="448" class="s">15</text><text x="962" y="448" class="s">20</text><text x="992" y="448" class="s">25</text>
<text x="842" y="485" class="s">30</text><text x="872" y="485" class="s">40</text><text x="902" y="485" class="s">50</text><text x="932" y="485" class="s">70</text><text x="962" y="485" class="s">100</text><text x="992" y="485" class="s">150</text>
<text x="842" y="522" class="s">200</text><text x="872" y="522" class="s">300</text><text x="902" y="522" class="s">400</text><text x="932" y="522" class="s">500</text><text x="962" y="522" class="s">700</text><text x="992" y="522" class="s">1000</text>
<rect x="1010" y="383" width="12" height="139" rx="5" fill="#6a6a6a"/>
<path d="M1012 380h7l-3.5-5zM1012 525h7l-3.5 5z" fill="#888"/>

<!-- taskbar -->
<rect y="547" width="1024" height="29" fill="#15130c"/>
<rect y="547" width="1024" height="1" fill="#555"/>
<svg x="0" y="548" width="1024" height="28" viewBox="0 548 1024 28">
<g filter="url(#bl2)" opacity=".55">
<ellipse cx="850" cy="565" rx="25" ry="10" fill="#26351e"/><ellipse cx="410" cy="565" rx="50" ry="8" fill="#3a2c14"/><ellipse cx="600" cy="560" rx="60" ry="10" fill="#332814"/><ellipse cx="720" cy="565" rx="40" ry="9" fill="#2a2a14"/><ellipse cx="950" cy="570" rx="50" ry="8" fill="#242010"/>
</g>
</svg>
<circle cx="20" cy="561" r="14" fill="url(#orb)"/><circle cx="20" cy="561" r="14" fill="none" stroke="#7ab" stroke-width=".7"/>
<path d="M14 556l5-1v5l-5 .5z" fill="#e8502a"/><path d="M20 555l6-1.5v6l-6 .5z" fill="#88c030"/><path d="M14 561.5l5-.5v5l-5-1z" fill="#38a0e0"/><path d="M20 561l6-.5v6l-6-1z" fill="#f8c020"/>
<path d="M68 551l9 7 9-7v20l-9-7-9 7z" fill="#6a36c8"/><path d="M77 558l9-7v20l-9-7z" fill="#c8b0f8"/><path d="M68 551v20l5-4v-12z" fill="#5a28b0"/>
<text x="125" y="570" class="c" style="font:italic bold 25px 'Liberation Serif',serif;fill:#2a90d8">e</text>
<path d="M113 571c2-9 12-20 23-21-3 1-20 13-20 22z" fill="#e8b830"/>
<circle cx="172" cy="561" r="12" fill="#a8d070"/><circle cx="172" cy="562" r="4.5" fill="none" stroke="#fff" stroke-width="2.5"/><path d="M177 553l7-3v5zM172 550l3 7-4-1zM180 559l5 1-5 2z" fill="#fff"/><path d="M178 552l3-1" stroke="#d85030" stroke-width="1.5"/>
<rect x="196" y="547.5" width="44" height="28" fill="url(#tbtn)" stroke="#5a5a50" stroke-width=".7"/>
<circle cx="218" cy="561" r="11" fill="#e8c020"/><path d="M218 550a11 11 0 0 1 9.5 5.5H218a5.5 5.5 0 0 0-5 3l-4.5-7.5A11 11 0 0 1 218 550z" fill="#e03a30"/><path d="M208.5 551.5a11 11 0 0 0 4 19l4.7-8a5 5 0 0 1-4.2-3z" fill="#30a050"/><circle cx="218" cy="561" r="5" fill="#4a80e8" stroke="#fff" stroke-width="1.3"/>
<rect x="243" y="547.5" width="43" height="28" fill="url(#tact)" stroke="#bde" stroke-width=".7"/>
<rect x="253" y="549" width="23" height="24" rx="4" fill="#f4f6f4"/>
<circle cx="264.5" cy="561" r="7.5" fill="#30a0c8"/><path d="M264.5 553.5a7.5 7.5 0 0 0-6 12l6-4.5z" fill="#e03a30"/><path d="M264.5 553.5a7.5 7.5 0 0 1 7 5h-7z" fill="#3aa050"/><path d="M264.5 568.5a7.5 7.5 0 0 1-6-3l6-4.5 6 5z" fill="#e8c020"/>
<rect x="289" y="547.5" width="44" height="28" fill="url(#tbtn)" stroke="#5a5a50" stroke-width=".7"/>
<path d="M298 560c0-6 12-9 19-6 4 3-1 6-3 8-2 3-1 7-6 7-5 1-10-4-10-9z" fill="#e8e8f0"/><circle cx="304" cy="559" r="1.8" fill="#e04040"/><circle cx="310" cy="557" r="1.8" fill="#40b050"/><circle cx="303" cy="564" r="1.8" fill="#4080e0"/>
<path d="M320 552l-6 18" stroke="#c89040" stroke-width="2.5"/>
<text x="928" y="563" class="c" style="font-size:9px;fill:#ccc">EN</text>
<path d="M946.5 563h5l-2.5-3z" fill="#ddd"/>
<text x="988" y="557" class="c" style="font-size:9px;fill:#ddd">7:28 PM</text><text x="988" y="571" class="c" style="font-size:9px;fill:#ddd">9/28/2021</text>
<rect x="1013" y="547" width="9" height="29" fill="#3a3a3a" stroke="#555" stroke-width=".5"/>
</svg>
</body></html>
